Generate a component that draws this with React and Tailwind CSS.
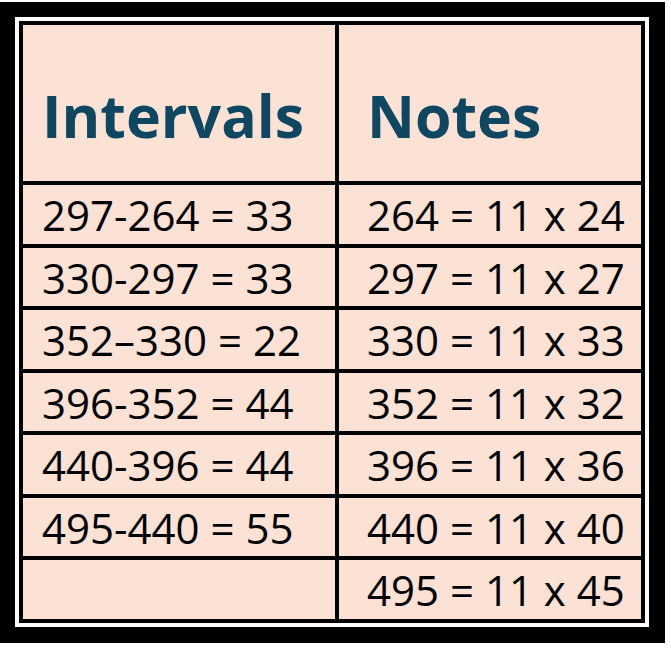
const rows = [
  ['297-264 = 33', '264 = 11 x 24'],
  ['330-297 = 33', '297 = 11 x 27'],
  ['352–330 = 22', '330 = 11 x 33'],
  ['396-352 = 44', '352 = 11 x 32'],
  ['440-396 = 44', '396 = 11 x 36'],
  ['495-440 = 55', '440 = 11 x 40'],
  ['', '495 = 11 x 45'],
]

export default function App() {
  return (
    <div className="bg-white pt-[2px]" style={{ fontFamily: '"Open Sans", Lato, sans-serif' }}>
      <div className="w-[665px] border-t-[15px] border-r-[16px] border-b-[16px] border-l-[15px] border-black bg-white p-[4px]">
        <div className="grid grid-cols-[312px_302px] gap-[4px] bg-black p-[4px]">
          {/* Header */}
          <div className="flex h-[156px] items-end bg-[#fbe2d5] pb-[36px] pl-[19px] text-[59px] leading-none font-bold text-[#0f4660]">
            Intervals
          </div>
          <div className="flex h-[156px] items-end bg-[#fbe2d5] pb-[36px] pl-[28px] text-[59px] leading-none font-bold text-[#0f4660]">
            Notes
          </div>
          {rows.map(([a, b], i) => (
            <>
              <div key={'a' + i} className="flex h-[58.5px] items-center bg-[#fbe2d5] pt-[2px] pl-[19px] text-[42px] leading-none text-black">
                {a}
              </div>
              <div key={'b' + i} className="flex h-[58.5px] items-center bg-[#fbe2d5] pt-[2px] pl-[28px] text-[42px] leading-none text-black">
                {b}
              </div>
            </>
          ))}
        </div>
      </div>
    </div>
  )
}
